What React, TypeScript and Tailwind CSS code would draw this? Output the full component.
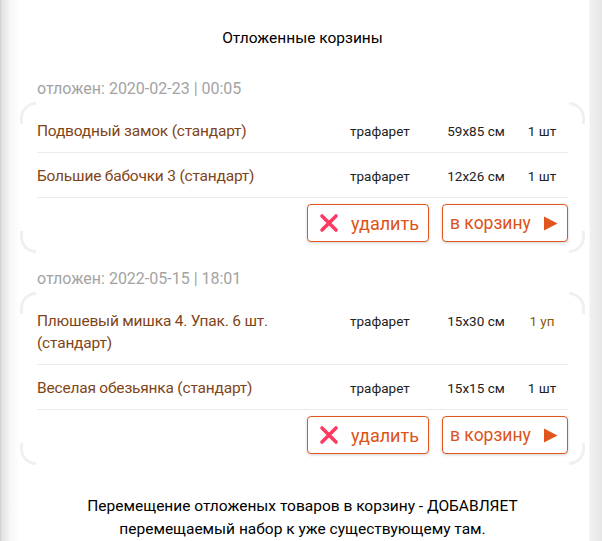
import React from "react";

type Item = { name: string; type: string; size: string; qty: string; qtyBrown?: boolean };
type Basket = { date: string; items: Item[] };

const baskets: Basket[] = [
  {
    date: "отложен: 2020-02-23 | 00:05",
    items: [
      { name: "Подводный замок (стандарт)", type: "трафарет", size: "59х85 см", qty: "1 шт" },
      { name: "Большие бабочки 3 (стандарт)", type: "трафарет", size: "12х26 см", qty: "1 шт" },
    ],
  },
  {
    date: "отложен: 2022-05-15 | 18:01",
    items: [
      { name: "Плюшевый мишка 4. Упак. 6 шт. (стандарт)", type: "трафарет", size: "15х30 см", qty: "1 уп", qtyBrown: true },
      { name: "Веселая обезьянка (стандарт)", type: "трафарет", size: "15х15 см", qty: "1 шт" },
    ],
  },
];

function Corners() {
  return (
    <>
      <div className="absolute left-0 top-0 w-[16px] h-[22px] border-t-[3px] border-l-[3px] border-[#f0f0f0] rounded-tl-[16px]" />
      <div className="absolute right-0 top-0 w-[16px] h-[22px] border-t-[3px] border-r-[3px] border-[#f0f0f0] rounded-tr-[16px]" />
      <div className="absolute left-0 bottom-0 w-[16px] h-[22px] border-b-[3px] border-l-[3px] border-[#f0f0f0] rounded-bl-[16px]" />
      <div className="absolute right-0 bottom-0 w-[16px] h-[22px] border-b-[3px] border-r-[3px] border-[#f0f0f0] rounded-br-[16px]" />
    </>
  );
}

function BasketCard({ b }: { b: Basket }) {
  return (
    <div>
      <div className="px-[17px] text-[16px] leading-[20px] text-[#a3a3a3] mb-[3px]">{b.date}</div>
      <div className="relative px-[17px] pt-[6px] pb-[11px]">
        <Corners />
        {b.items.map((it, i) => (
          <div key={i} className="flex items-start border-b border-[#ebebeb] pt-[12px] pb-[10px] leading-[22px]">
            <div className="flex-1 pr-[14px] text-[15.5px] tracking-[-0.2px] text-[#7f4519]">{it.name}</div>
            <div className="w-[90px] text-[13.5px] text-[#222]">{it.type}</div>
            <div className="w-[76px] pr-[4px] text-center text-[13.5px] text-[#222]">{it.size}</div>
            <div className={"w-[52px] text-center text-[13.5px] " + (it.qtyBrown ? "text-[#8a5a0c]" : "text-[#222]")}>{it.qty}</div>
          </div>
        ))}
        <div className="flex justify-end gap-[13px] mt-[6px]">
          <button className="flex items-center w-[122px] h-[38px] border border-[#e0561e] rounded-[4px] bg-white shadow-[0_1px_3px_rgba(0,0,0,0.18)] pl-[11px]">
            <svg width="20" height="20" viewBox="0 0 20 20" className="shrink-0">
              <path d="M3 3 L17 17 M17 3 L3 17" stroke="#ff3a62" strokeWidth="3.6" strokeLinecap="round" />
            </svg>
            <span className="ml-[12px] text-[18px] text-[#dc5317]">удалить</span>
          </button>
          <button className="flex items-center w-[126px] h-[38px] border border-[#e0561e] rounded-[4px] bg-white shadow-[0_1px_3px_rgba(0,0,0,0.18)] pl-[7px]">
            <span className="text-[17.5px] text-[#dc5317]">в корзину</span>
            <svg width="15" height="15" viewBox="0 0 15 15" className="ml-[12px] shrink-0">
              <path d="M1 0.5 L14.5 7.5 L1 14.5 Z" fill="#e0561e" />
            </svg>
          </button>
        </div>
      </div>
    </div>
  );
}

export default function App() {
  return (
    <div
      className="w-[602px] h-[541px] overflow-hidden bg-[linear-gradient(to_right,#cfcfcf_0px,#e2e2e2_2px,#f6f6f6_10px,#ffffff_20px,#ffffff_589px,#f0f0f0_590px,#e6e6e6_602px)]"
      style={{ fontFamily: "Roboto, 'Noto Sans', sans-serif" }}
    >
      <div className="pl-[20px] pr-[17px]">
        <div className="pt-[26px] text-center text-[15.5px] leading-[24px] text-black">Отложенные корзины</div>
        <div className="mt-[29px] flex flex-col gap-[16px]">
          {baskets.map((b, i) => (
            <BasketCard key={i} b={b} />
          ))}
        </div>
        <div className="mt-[30px] text-center text-[15.5px] leading-[23px] text-black">
          Перемещение отложеных товаров в корзину - ДОБАВЛЯЕТ
          <br />
          перемещаемый набор к уже существующему там.
        </div>
      </div>
    </div>
  );
}
